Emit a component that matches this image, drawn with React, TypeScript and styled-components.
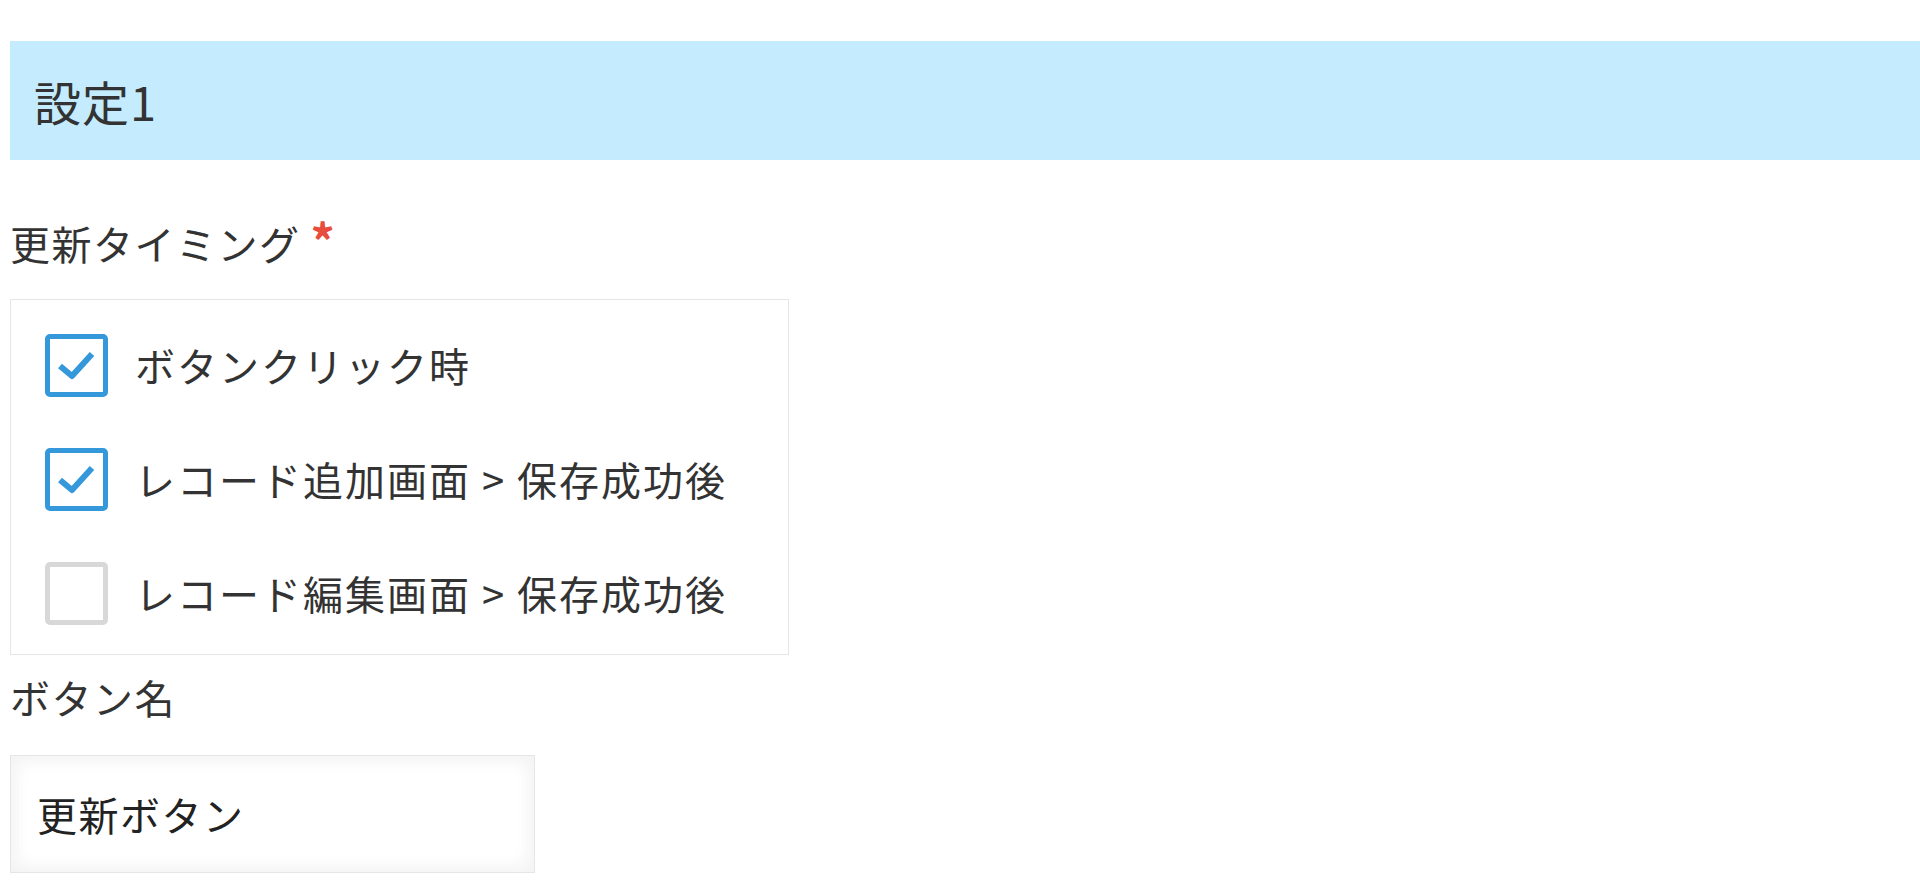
import styled, { createGlobalStyle } from "styled-components";

const GlobalStyle = createGlobalStyle`
  html, body {
    margin: 0;
    padding: 0;
    background: #fff;
  }
  body {
    font-family: "Noto Sans CJK JP", "Noto Sans", sans-serif;
    color: #333;
  }
`;

const Page = styled.div`
  padding: 41px 0 40px 10px;
`;

const SectionTitle = styled.h2`
  margin: 0;
  height: 119px;
  display: flex;
  align-items: center;
  padding-left: 24px;
  background: #c4ecfe;
  font-size: 47px;
  font-weight: 400;
  letter-spacing: 1px;
  color: #333;
`;

const Label = styled.div<{ $top: number }>`
  margin-top: ${(p) => p.$top}px;
  height: 48px;
  font-size: 40px;
  line-height: 48px;
  letter-spacing: 1.5px;
  color: #333;
`;

const Required = styled.span`
  color: #e74c3c;
  font-weight: 700;
  font-size: 48px;
  line-height: 0;
  margin-left: 10px;
`;

const CheckboxGroup = styled.div`
  margin-top: 32px;
  width: 779px;
  box-sizing: border-box;
  border: 1px solid #e3e7e8;
  padding: 8px 0 4px 34px;
`;

const CheckRow = styled.label`
  display: flex;
  align-items: center;
  height: 114px;
  gap: 27px;
  font-size: 40px;
  letter-spacing: 2px;
  color: #333;
`;

const Box = styled.span<{ $checked: boolean }>`
  flex: none;
  width: 63px;
  height: 63px;
  box-sizing: border-box;
  border: 5px solid ${(p) => (p.$checked ? "#3498db" : "#d8d8d8")};
  border-radius: 5px;
  display: flex;
  background: #fff;
`;

const TextInput = styled.input`
  margin-top: 34px;
  width: 525px;
  height: 118px;
  box-sizing: border-box;
  border: 1px solid #e3e7e8;
  padding: 0 26px;
  font-family: inherit;
  font-size: 40px;
  letter-spacing: 1.5px;
  color: #222;
  box-shadow: 2px 2px 20px #f3f3f3 inset, -2px -2px 20px #f3f3f3 inset;
  outline: none;
  display: block;
`;

const options = [
  { text: "ボタンクリック時", checked: true },
  { text: "レコード追加画面 > 保存成功後", checked: true },
  { text: "レコード編集画面 > 保存成功後", checked: false },
];

function Check({ checked }: { checked: boolean }) {
  return (
    <Box $checked={checked}>
      {checked && (
        <svg width="53" height="53" viewBox="0 0 53 53">
          <path
            d="M10 27 L22 37 L42 15"
            fill="none"
            stroke="#3498db"
            strokeWidth="6"
            strokeLinejoin="round"
          />
        </svg>
      )}
    </Box>
  );
}

export default function App() {
  return (
    <Page>
      <GlobalStyle />
      <SectionTitle>設定1</SectionTitle>
      <Label $top={59}>
        更新タイミング<Required>*</Required>
      </Label>
      <CheckboxGroup>
        {options.map((o) => (
          <CheckRow key={o.text}>
            <Check checked={o.checked} />
            <span>{o.text}</span>
          </CheckRow>
        ))}
      </CheckboxGroup>
      <Label $top={18}>ボタン名</Label>
      <TextInput defaultValue="更新ボタン" />
    </Page>
  );
}
